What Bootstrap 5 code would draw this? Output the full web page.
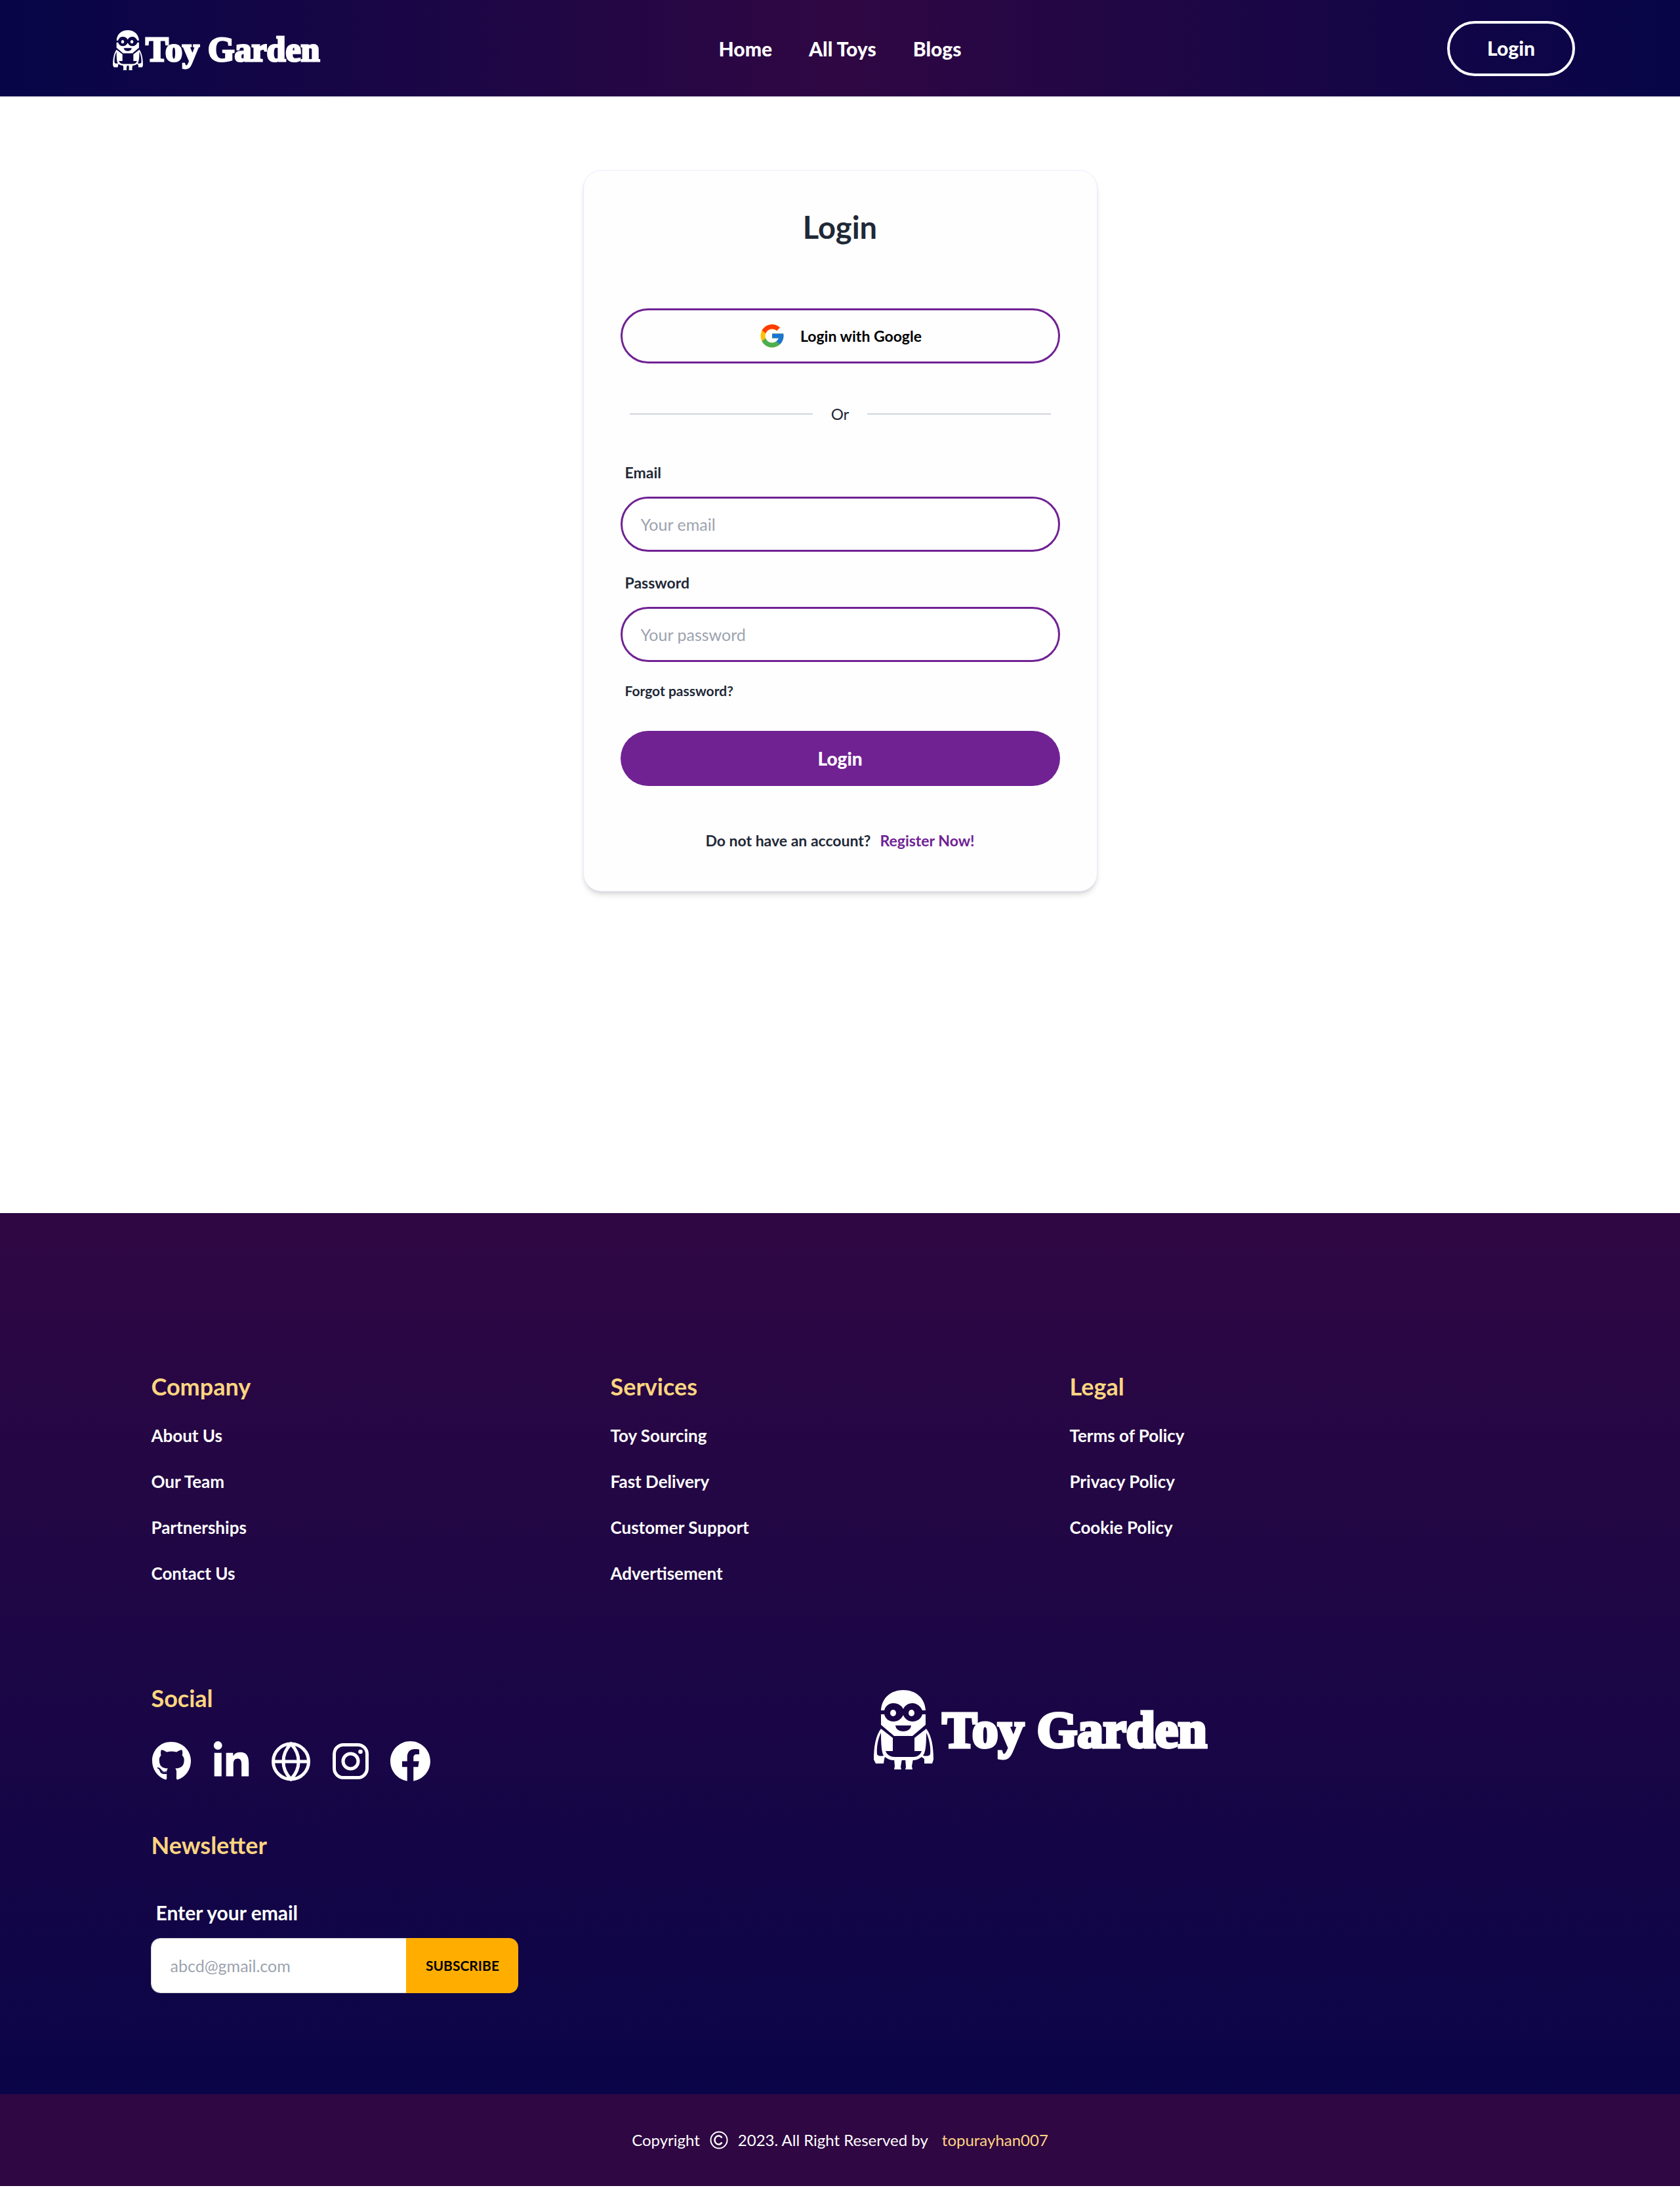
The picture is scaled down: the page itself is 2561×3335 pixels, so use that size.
<!DOCTYPE html>
<html lang="en">
<head>
<meta charset="utf-8">
<meta name="viewport" content="width=device-width, initial-scale=1">
<title>Toy Garden | Login</title>
<link href="https://cdn.jsdelivr.net/npm/bootstrap@5.3.0/dist/css/bootstrap.min.css" rel="stylesheet">
<style>
  :root { --plum: #2f0743; --navy: #060548; --violet: #702293; --sand: #ffd580; --ink: #1f2937; }
  body { font-family: Lato, sans-serif; font-size: 24px; line-height: 42px; color: var(--ink); background: #fff; }
  a { text-decoration: none; }
  .topbar { --bs-navbar-padding-y: 0; height: 147px; padding: 0 6.25%; background: linear-gradient(to right, var(--navy), var(--plum), var(--navy)); }
  .side { flex: 1 1 0; }
  .menu-links { gap: 56px; font-size: 30px; font-weight: 900; }
  .menu-links a { color: #fff; }
  .pill { height: 84px; border-radius: 42px; font-weight: 900; padding: 0 28px; }
  .pill-light { border: 4px solid #fff; color: #fff; font-size: 30px; padding: 0 57px; }
  .pill-line { border: 3px solid var(--violet); color: #000; font-size: 23px; font-weight: 700; gap: 22px; }
  .pill-fill, .pill-fill:hover { background: var(--violet); color: #fff; font-size: 28px; }
  .brand-logo { gap: 4px; padding: 5px 0 0 12px; color: #fff; }
  .brand-logo svg { width: 46px; height: 61px; }
  .brand-name { font-family: "Liberation Serif", serif; font-weight: 700; font-size: 52px; line-height: 60px; -webkit-text-stroke: 3px #fff; white-space: nowrap; }
  .brand-big { gap: 14px; padding: 13px 0 0 51px; }
  .brand-big svg { width: 91px; height: 121px; }
  .brand-big .brand-name { font-size: 79px; line-height: 96px; -webkit-text-stroke-width: 5px; }
  main { padding: 112px 16px 490px; }
  .login-box { max-width: 784px; border: 1px solid #ede9fe; border-radius: 28px; padding: 56px; background: #fefefe; box-shadow: 0 7px 10px -2px rgba(0,0,0,.12), 0 3px 7px -3px rgba(0,0,0,.12); }
  .login-box h1 { font-size: 47px; line-height: 60px; font-weight: 700; margin-bottom: 94px; }
  .divider { gap: 28px; margin: 56px 14px 47px; }
  .divider hr { flex: 1; margin: 0; border-top: 2px solid #d1d5db; opacity: 1; }
  .field { margin-bottom: 26px; }
  .field label { display: block; font-size: 23px; font-weight: 700; padding-left: 7px; margin-bottom: 16px; }
  .field .form-control { height: 84px; border: 3px solid var(--violet); border-radius: 42px; font-size: 25px; padding: 0 28px; }
  .form-control::placeholder { color: #9ca3af; }
  .forgot { display: block; color: var(--ink); font-weight: 700; font-size: 21px; line-height: 36px; padding-left: 7px; margin-bottom: 43px; }
  .signup { margin-top: 62px; gap: 14px; font-size: 23px; font-weight: 700; }
  .signup a { color: var(--violet); }
  footer { color: #fff; }
  footer a { color: #fff; }
  .foot-main { background: linear-gradient(to bottom, var(--plum), #0a0548); padding: 239px 9% 154px; }
  .foot-main h2 { font-size: 36px; line-height: 50px; font-weight: 700; color: var(--sand); margin: 0; }
  .foot-links { margin: 29px 0 144px; gap: 28px; font-size: 26px; font-weight: 700; }
  .social { gap: 30px; margin: 41px 0 72px; padding-left: 1px; }
  .social svg { display: block; width: 61px; height: 61px; fill: currentColor; }
  .newsletter { max-width: 560px; margin-top: 53px; }
  .newsletter label { display: block; font-size: 30px; line-height: 50px; font-weight: 700; padding-left: 7px; margin-bottom: 14px; }
  .newsletter .form-control { height: 84px; border: 1px solid #d2d4d7; border-radius: 14px; font-size: 25px; padding: 0 28px; }
  .newsletter .btn { width: 171px; padding: 0; background: #ffae00; color: #000; font-size: 21px; font-weight: 700; border: 0; border-radius: 14px; }
  .copybar { background: var(--plum); height: 140px; margin-bottom: 3px; gap: 15px; }
  .copybar svg { width: 28px; height: 28px; }
  .copybar a { color: var(--sand); margin-left: 6px; }
</style>
</head>
<body>
<svg class="d-none" aria-hidden="true">
  <symbol id="minion" viewBox="0 0 91 121">
    <g fill="currentColor">
      <path fill-rule="evenodd" d="M11 31C12 12 26 0 45 0s33 12 34 31h-5c-3-7-9-11-15-11-7 0-12 4-14 9-2-5-8-9-15-9-7 0-12 4-14 11zM11 37h5c2 7 7 11 14 11 7 0 12-4 15-10 2 6 8 10 14 10 7 0 13-4 15-11h5v16L59 70H31L11 53zM33 54c1 12 23 12 24 0z"/>
      <ellipse cx="29.500" cy="35" rx="4.500" ry="5"/><ellipse cx="57.500" cy="35" rx="4.500" ry="5"/>
      <path fill-rule="evenodd" d="M11 59L29 73v20H18c2 6 8 9 14 9h28c6 0 11-3 13-9H62V73l18-14c8 10 11 27 11 47l-2 6H77v-7l-4-3c-4 3-8 5-14 5H31c-6 0-10-2-14-5l-1 3-1 7H3l-3-6c0-20 3-37 11-47zM11 65C6 75 4 88 5 98c2 3 6 3 10 2-3-5-4-16-4-35zM80 65c0 19-1 30-5 35 5 1 9 1 11-2 1-10-1-23-6-33z"/>
      <path d="M31 105h12l-2 12 1 4H31l1-5zM48 105h12l-2 11 1 5H48l1-4z"/>
    </g>
  </symbol>
</svg>

<nav class="navbar topbar d-flex flex-nowrap align-items-center">
  <div class="side">
    <a class="brand-logo d-flex align-items-center" href="#" aria-label="Toy Garden">
      <svg aria-hidden="true"><use href="#minion"/></svg><span class="brand-name">Toy Garden</span>
    </a>
  </div>
  <div class="menu-links d-flex">
    <a href="#">Home</a><a href="#">All Toys</a><a href="#">Blogs</a>
  </div>
  <div class="side d-flex justify-content-end">
    <button type="button" class="btn pill pill-light">Login</button>
  </div>
</nav>

<main>
  <section class="login-box mx-auto">
    <h1 class="text-center">Login</h1>
    <button type="button" class="btn pill pill-line w-100 d-flex align-items-center justify-content-center">
      <svg width="42" height="42" viewBox="0 0 48 48" aria-hidden="true">
        <path fill="#FFC107" d="M43.611 20.083H42V20H24v8h11.303c-1.649 4.657-6.080 8-11.303 8-6.627 0-12-5.373-12-12s5.373-12 12-12c3.059 0 5.842 1.154 7.961 3.039l5.657-5.657C34.046 6.053 29.268 4 24 4 12.955 4 4 12.955 4 24s8.955 20 20 20 20-8.955 20-20c0-1.341-.138-2.650-.389-3.917z"/>
        <path fill="#FF3D00" d="M6.306 14.691l6.571 4.819C14.655 15.108 18.961 12 24 12c3.059 0 5.842 1.154 7.961 3.039l5.657-5.657C34.046 6.053 29.268 4 24 4 16.318 4 9.656 8.337 6.306 14.691z"/>
        <path fill="#4CAF50" d="M24 44c5.166 0 9.860-1.977 13.409-5.192l-6.190-5.238C29.211 35.091 26.715 36 24 36c-5.202 0-9.619-3.317-11.283-7.946l-6.522 5.025C9.505 39.556 16.227 44 24 44z"/>
        <path fill="#1976D2" d="M43.611 20.083H42V20H24v8h11.303c-.792 2.237-2.231 4.166-4.087 5.571l6.193 5.238C36.971 39.205 44 34 44 24c0-1.341-.138-2.650-.389-3.917z"/>
      </svg>
      <span>Login with Google</span>
    </button>
    <div class="divider d-flex align-items-center"><hr><span>Or</span><hr></div>
    <form>
      <div class="field">
        <label for="email">Email</label>
        <input id="email" type="email" class="form-control" placeholder="Your email">
      </div>
      <div class="field">
        <label for="password">Password</label>
        <input id="password" type="password" class="form-control" placeholder="Your password">
      </div>
      <a class="forgot" href="#">Forgot password?</a>
      <button type="submit" class="btn pill pill-fill w-100">Login</button>
    </form>
    <div class="signup d-flex justify-content-center"><span>Do not have an account?</span><a href="#">Register Now!</a></div>
  </section>
</main>

<footer>
  <div class="foot-main">
    <div class="row g-0">
      <div class="col-4">
        <h2>Company</h2>
        <div class="foot-links d-flex flex-column align-items-start">
          <a href="#">About Us</a><a href="#">Our Team</a><a href="#">Partnerships</a><a href="#">Contact Us</a>
        </div>
      </div>
      <div class="col-4">
        <h2>Services</h2>
        <div class="foot-links d-flex flex-column align-items-start">
          <a href="#">Toy Sourcing</a><a href="#">Fast Delivery</a><a href="#">Customer Support</a><a href="#">Advertisement</a>
        </div>
      </div>
      <div class="col-4">
        <h2>Legal</h2>
        <div class="foot-links d-flex flex-column align-items-start">
          <a href="#">Terms of Policy</a><a href="#">Privacy Policy</a><a href="#">Cookie Policy</a>
        </div>
      </div>
    </div>
    <div class="row g-0">
      <div class="col-6">
        <h2>Social</h2>
        <div class="social d-flex">
          <a href="#" aria-label="GitHub"><svg viewBox="0 0 496 512"><path d="M165.900 397.400c0 2-2.300 3.600-5.200 3.600-3.300.3-5.600-1.300-5.600-3.600 0-2 2.300-3.600 5.200-3.600 3-.3 5.600 1.300 5.600 3.600zm-31.100-4.500c-.7 2 1.300 4.300 4.300 4.900 2.600 1 5.600 0 6.200-2s-1.300-4.300-4.300-5.200c-2.600-.7-5.500.3-6.200 2.300zm44.200-1.700c-2.900.7-4.900 2.600-4.600 4.900.3 2 2.900 3.300 5.900 2.600 2.900-.7 4.900-2.600 4.600-4.600-.3-1.900-3-3.200-5.900-2.900zM244.800 8C106.100 8 0 113.300 0 252c0 110.900 69.800 205.800 169.500 239.200 12.800 2.300 17.300-5.600 17.300-12.100 0-6.200-.3-40.400-.3-61.400 0 0-70 15-84.700-29.800 0 0-11.400-29.100-27.800-36.600 0 0-22.900-15.700 1.600-15.400 0 0 24.900 2 38.600 25.800 21.900 38.600 58.600 27.500 72.900 20.900 2.300-16 8.800-27.100 16-33.700-55.900-6.200-112.300-14.300-112.300-110.500 0-27.500 7.600-41.300 23.600-58.900-2.600-6.500-11.100-33.300 2.600-67.900 20.900-6.500 69 27 69 27 20-5.600 41.500-8.500 62.800-8.500s42.800 2.900 62.800 8.500c0 0 48.100-33.600 69-27 13.700 34.700 5.200 61.400 2.600 67.900 16 17.700 25.800 31.500 25.800 58.900 0 96.500-58.900 104.200-114.800 110.500 9.200 7.900 17 22.900 17 46.400 0 33.700-.3 75.400-.3 83.600 0 6.500 4.600 14.400 17.300 12.100C428.200 457.800 496 362.900 496 252 496 113.300 383.500 8 244.800 8z"/></svg></a>
          <a href="#" aria-label="LinkedIn"><svg viewBox="0 0 448 512"><path d="M100.280 448H7.400V148.900h92.880zM53.790 108.100C24.090 108.100 0 83.500 0 53.800a53.790 53.790 0 0 1 107.580 0c0 29.700-24.100 54.300-53.790 54.300zM447.900 448h-92.680V302.400c0-34.700-.7-79.200-48.290-79.200-48.290 0-55.690 37.700-55.690 76.700V448h-92.780V148.900h89.080v40.800h1.300c12.400-23.500 42.690-48.300 87.880-48.300 94 0 111.280 61.900 111.280 142.300V448z"/></svg></a>
          <a href="#" aria-label="Website"><svg viewBox="0 0 61 61"><g fill="none" stroke="currentColor" stroke-width="5"><circle cx="30.500" cy="31" r="27"/><path d="M30.500 4C15 20 15 42 30.500 58C46 42 46 20 30.500 4zM3.500 31h54"/></g></svg></a>
          <a href="#" aria-label="Instagram"><svg viewBox="0 0 61 61"><g fill="none" stroke="currentColor" stroke-width="5"><rect x="5.500" y="5.500" width="50" height="50" rx="14"/><circle cx="30.500" cy="30.500" r="11.500"/></g><circle cx="45.500" cy="16" r="3.300"/></svg></a>
          <a href="#" aria-label="Facebook"><svg viewBox="8 8 496 496"><path d="M504 256C504 119 393 8 256 8S8 119 8 256c0 123.780 90.690 226.380 209.250 245V327.690h-63V256h63v-54.640c0-62.150 37-96.480 93.670-96.480 27.140 0 55.520 4.840 55.520 4.840v61h-31.280c-30.800 0-40.410 19.120-40.410 38.730V256h68.780l-11 71.690h-57.780V501C413.310 482.380 504 379.780 504 256z"/></svg></a>
        </div>
        <h2>Newsletter</h2>
        <form class="newsletter">
          <label for="news-email">Enter your email</label>
          <div class="input-group">
            <input id="news-email" type="email" class="form-control" placeholder="abcd@gmail.com">
            <button type="submit" class="btn">SUBSCRIBE</button>
          </div>
        </form>
      </div>
      <div class="col-6">
        <a class="brand-logo brand-big d-flex align-items-center" href="#" aria-label="Toy Garden">
          <svg aria-hidden="true"><use href="#minion"/></svg><span class="brand-name">Toy Garden</span>
        </a>
      </div>
    </div>
  </div>
  <div class="copybar d-flex align-items-center justify-content-center">
    <span>Copyright</span>
    <svg viewBox="0 0 28 28" fill="none" stroke="currentColor" role="img" aria-label="copyright sign"><circle cx="14" cy="14" r="12.500" stroke-width="2"/><path d="M18.500 17.500a6 6.500 0 1 1 0-7" stroke-width="2.500"/></svg>
    <span>2023. All Right Reserved by</span>
    <a href="#">topurayhan007</a>
  </div>
</footer>
<script src="https://cdn.jsdelivr.net/npm/bootstrap@5.3.0/dist/js/bootstrap.bundle.min.js"></script>
</body>
</html>
